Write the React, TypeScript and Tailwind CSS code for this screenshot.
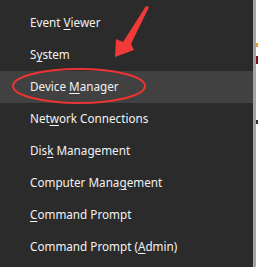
import type { ReactNode } from "react";

type Item = { pre: string; key: string; post: string; active?: boolean };

const ITEMS: Item[] = [
  { pre: "Event ", key: "V", post: "iewer" },
  { pre: "S", key: "y", post: "stem" },
  { pre: "Device ", key: "M", post: "anager", active: true },
  { pre: "Net", key: "w", post: "ork Connections" },
  { pre: "Dis", key: "k", post: " Management" },
  { pre: "Computer Mana", key: "g", post: "ement" },
  { pre: "", key: "C", post: "ommand Prompt" },
  { pre: "Command Prompt (", key: "A", post: "dmin)" },
];

function Row({ item }: { item: Item }): ReactNode {
  return (
    <div
      className={`flex h-8 items-center pl-[30px] text-[11.7px] text-[#f2f2f2] ${
        item.active ? "bg-[#414141]" : ""
      }`}
    >
      <span>
        {item.pre}
        <span className="underline underline-offset-2">{item.key}</span>
        {item.post}
      </span>
    </div>
  );
}

export default function App() {
  return (
    <div className="flex h-[267px] w-[259px] overflow-hidden bg-white" style={{ fontFamily: '"Noto Sans", "Open Sans", sans-serif' }}>
      <div className="relative h-full w-[253px] shrink-0 bg-[#2b2b2b] pt-[7px]">
        {ITEMS.map((it) => (
          <Row key={it.pre + it.key} item={it} />
        ))}
        <svg className="pointer-events-none absolute left-0 top-0" width="253" height="267" viewBox="0 0 253 267">
          <ellipse cx="79" cy="86" rx="66" ry="17" fill="none" stroke="#ec3434" strokeWidth="2" />
          <polygon points="149,7 131,44 134,50 115,57 116,39 123,42 146,6" fill="#f03a3a" />
        </svg>
      </div>
      <div className="h-full w-[3px] shrink-0 bg-[#a3a3a3]" />
      <div className="flex h-full flex-1 flex-col bg-white">
        <div className="mt-[43px] h-[4px] w-[2px] bg-[#e0a020]" />
        <div className="mt-[9px] h-[8px] w-[2px] bg-[#7a1020]" />
        <div className="mt-[56px] h-[4px] w-[2px] bg-[#303030]" />
      </div>
    </div>
  );
}
